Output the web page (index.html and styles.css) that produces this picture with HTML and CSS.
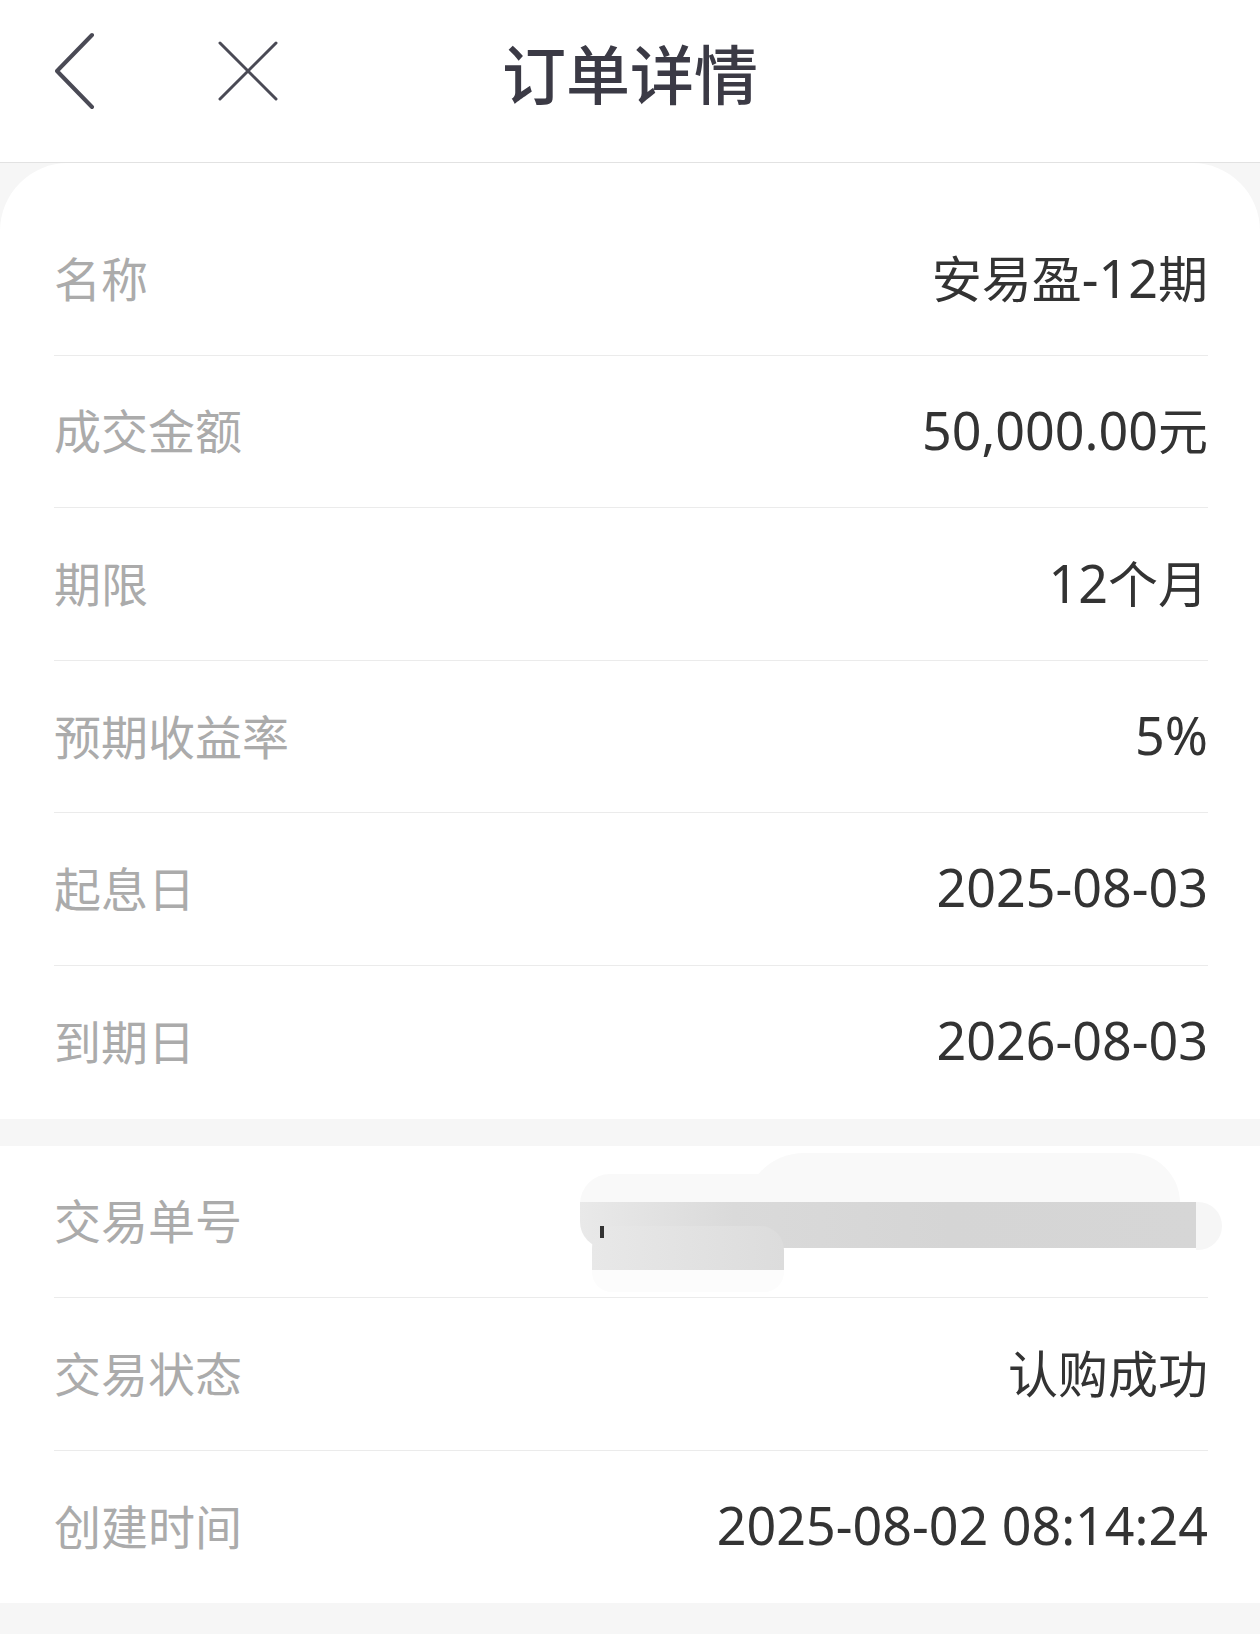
FILE: index.html
```html
<!DOCTYPE html>
<html lang="zh-CN">
<head>
    <meta charset="UTF-8">
    <meta name="viewport" content="width=device-width, initial-scale=1.0">
    <title>订单详情</title>
    <link rel="stylesheet" href="styles.css">
</head>
<body>
    <header class="top-bar">
        <div class="top-actions">
            <span class="icon-btn back-btn">
                <svg width="44" height="80" viewBox="0 0 44 80"><polyline points="37,4 2,40 37,76" fill="none" stroke="#4a4a55" stroke-width="4" stroke-linecap="round" stroke-linejoin="round"/></svg>
            </span>
            <span class="icon-btn close-btn">
                <svg width="62" height="62" viewBox="0 0 62 62"><path d="M3 3 L59 59 M59 3 L3 59" fill="none" stroke="#4a4a55" stroke-width="3" stroke-linecap="round"/></svg>
            </span>
        </div>
        <h1 class="page-title">订单详情</h1>
        <div></div>
    </header>

    <main class="content">
        <section class="card card-first">
            <div class="row"><span class="label">名称</span><span class="value"><span class="cjk">安易盈</span>-12<span class="cjk">期</span></span></div>
            <div class="row"><span class="label">成交金额</span><span class="value">50,000.00<span class="cjk">元</span></span></div>
            <div class="row"><span class="label">期限</span><span class="value">12<span class="cjk">个月</span></span></div>
            <div class="row"><span class="label">预期收益率</span><span class="value">5%</span></div>
            <div class="row"><span class="label">起息日</span><span class="value">2025-08-03</span></div>
            <div class="row"><span class="label">到期日</span><span class="value">2026-08-03</span></div>
        </section>

        <section class="card">
            <div class="row row-masked">
                <span class="label">交易单号</span>
                <span class="value"></span>
                <!-- 打码区域 -->
                <div class="mask mask-top-left"></div>
                <div class="mask mask-top-right"></div>
                <div class="mask mask-band"></div>
                <div class="mask mask-cap"></div>
                <div class="mask mask-low"></div>
                <div class="mask mask-low-fade"></div>
                <div class="mask-peek"></div>
            </div>
            <div class="row"><span class="label">交易状态</span><span class="value"><span class="cjk">认购成功</span></span></div>
            <div class="row"><span class="label">创建时间</span><span class="value">2025-08-02 08:14:24</span></div>
        </section>
    </main>
</body>
</html>
```

FILE: styles.css
```css
body {
    margin: 0;
    padding: 0;
    background-color: #f6f6f6;
    font-family: "Noto Sans CJK SC", "Noto Sans", sans-serif;
}

.top-bar {
    height: 163px;
    box-sizing: border-box;
    padding-bottom: 20px;
    background-color: #fff;
    border-bottom: 1px solid #e2e2e2;
    display: grid;
    grid-template-columns: 1fr auto 1fr;
    align-items: center;
}
.top-actions {
    display: flex;
    align-items: center;
    padding-left: 55px;
    gap: 118px;
}
.icon-btn {
    display: flex;
}
.page-title {
    margin: 0;
    font-size: 64px;
    font-weight: 500;
    color: #3b3a45;
}

.content {
    display: flex;
    flex-direction: column;
    gap: 27px;
    padding-bottom: 32px;
}
.card {
    background-color: #fff;
    padding: 0 52px 0 54px;
}
.card-first {
    border-radius: 68px 68px 0 0;
    padding-top: 40px;
}

.row {
    height: 152.6px;
    box-sizing: border-box;
    padding-bottom: 5px;
    display: flex;
    justify-content: space-between;
    align-items: center;
    border-bottom: 1px solid #ebebeb;
}
.row:last-child {
    border-bottom: none;
}
.label {
    font-size: 47px;
    color: #ababab;
}
.value {
    font-family: "Noto Sans", "Noto Sans CJK SC", sans-serif;
    font-size: 52px;
    color: #333;
}
.value .cjk {
    font-family: "Noto Sans CJK SC", sans-serif;
    font-size: 50px;
}

/* 交易单号打码 */
.row-masked {
    position: relative;
}
.mask {
    position: absolute;
}
.mask-top-left {
    left: 526px;
    top: 28px;
    width: 220px;
    height: 40px;
    background-color: #f9f9f9;
    border-radius: 30px 0 0 0;
}
.mask-top-right {
    left: 690px;
    top: 7px;
    width: 436px;
    height: 60px;
    background-color: #f9f9f9;
    border-radius: 60px 50px 0 0;
}
.mask-band {
    left: 526px;
    top: 56px;
    width: 616px;
    height: 46px;
    background: linear-gradient(90deg, #e9e9e9, #dadada 25%, #d5d5d5 60%, #d6d6d6);
    border-radius: 0 0 0 26px;
}
.mask-cap {
    left: 1142px;
    top: 56px;
    width: 26px;
    height: 48px;
    background-color: #f6f6f6;
    border-radius: 0 24px 24px 0;
}
.mask-low {
    left: 538px;
    top: 80px;
    width: 192px;
    height: 44px;
    background: linear-gradient(90deg, #e8e8e8, #dcdcdc);
    border-radius: 22px 24px 0 0;
}
.mask-low-fade {
    left: 538px;
    top: 124px;
    width: 192px;
    height: 22px;
    background-color: #fcfcfc;
    border-radius: 0 0 20px 20px;
}
.mask-peek {
    position: absolute;
    left: 546px;
    top: 80px;
    width: 4px;
    height: 12px;
    background-color: #333;
}
```
